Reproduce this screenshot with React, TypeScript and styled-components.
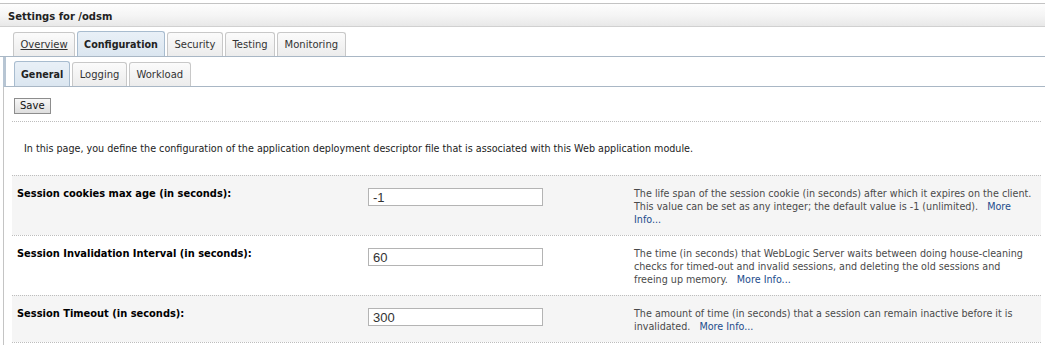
import React from "react";
import styled, { createGlobalStyle } from "styled-components";

const FONT = `"DejaVu Sans", Verdana, sans-serif`;

const GlobalStyle = createGlobalStyle`
  html, body { margin: 0; padding: 0; background: #ffffff; }
  body { font-family: ${FONT}; font-size: 9.6px; color: #333; }
  * { box-sizing: border-box; }
`;

const Page = styled.div`
  width: 1045px;
  height: 345px;
  overflow: hidden;
  padding-top: 3px;
  display: flex;
  flex-direction: column;
`;

const TitleBar = styled.div`
  height: 24px;
  flex: none;
  border-top: 1px solid #c3c3c3;
  border-bottom: 1px solid #d0d0d0;
  background: linear-gradient(to bottom, #fdfdfd 0%, #f4f4f4 55%, #e8e8e8 100%);
  display: flex;
  align-items: center;
  padding: 2px 0 0 8px;
  font-weight: bold;
  font-size: 10px;
  color: #222;
`;

const TabStrip = styled.div<{ $sub?: boolean }>`
  flex: none;
  display: flex;
  align-items: flex-end;
  gap: 2px;
  height: 30px;
  padding-left: ${(p) => (p.$sub ? 8 : 13)}px;
  border-bottom: 1px solid #a9b7c5;
  ${(p) => (p.$sub ? "border-left: 3px solid #b7c5d3; margin-left: -1px;" : "")}
`;

const Tab = styled.div<{ $active?: boolean }>`
  height: ${(p) => (p.$active ? 25 : 24)}px;
  padding: 0 ${(p) => (p.$active ? 6 : 6.5)}px;
  display: flex;
  align-items: center;
  border: 1px solid ${(p) => (p.$active ? "#a8bccf" : "#c8c8c8")};
  border-bottom: none;
  border-radius: 3px 3px 0 0;
  background: ${(p) =>
    p.$active
      ? "linear-gradient(to bottom, #e9f0f7 0%, #dbe6f0 100%)"
      : "linear-gradient(to bottom, #fbfbfb 0%, #ececec 100%)"};
  font-weight: ${(p) => (p.$active ? "bold" : "normal")};
  font-size: ${(p) => (p.$active ? 9.6 : 10)}px;
  color: ${(p) => (p.$active ? "#222" : "#333")};
  white-space: nowrap;
`;

const TabLink = styled.span`
  text-decoration: underline;
`;

const Panel = styled.div`
  flex: 1;
  margin-left: 3px;
  border-left: 1px solid #c4c4c4;
  display: flex;
  flex-direction: column;
`;

const Toolbar = styled.div`
  padding: 11px 0 0 10px;
  height: 34px;
`;

const Button = styled.button`
  height: 16px;
  padding: 0 5px;
  font-family: ${FONT};
  font-size: 10px;
  color: #111;
  border: 1px solid #8d8d8d;
  border-radius: 0;
  background: linear-gradient(to bottom, #f7f7f7 0%, #dedede 100%);
  line-height: 14px;
`;

const Content = styled.div`
  margin: 0 4px 0 8px;
  border-bottom: 1px dotted #bdbdbd;
`;

const Intro = styled.div`
  border-top: 1px dotted #bdbdbd;
  padding: 20px 0 20px 12px;
  line-height: 13px;
  color: #222;
`;

const Row = styled.div<{ $shade?: boolean }>`
  display: grid;
  grid-template-columns: 351px 266px 1fr;
  border-top: 1px dotted #bdbdbd;
  background: ${(p) => (p.$shade ? "#f5f5f5" : "#ffffff")};
  padding: 11px 0 9px 0;
  line-height: 13px;
`;

const Label = styled.div`
  padding-left: 5px;
  font-weight: bold;
  font-size: 9.9px;
  color: #000;
`;

const InputCell = styled.div`
  padding-left: 5px;
  padding-top: 1px;
`;

const TextInput = styled.input`
  width: 175px;
  height: 18px;
  border: 1px solid #b4b4b4;
  background: #fff;
  padding: 0 4px;
  font-family: "Liberation Sans", Arial, sans-serif;
  font-size: 13px;
  color: #333;
  outline: none;
`;

const Help = styled.div`
  padding: 0 6.5px 0 5px;
  color: #4a4a4a;
`;

const More = styled.a`
  color: #1c4c8c;
  text-decoration: none;
  margin-left: 9px;
`;

const fields = [
  {
    label: "Session cookies max age (in seconds):",
    value: "-1",
    help: "The life span of the session cookie (in seconds) after which it expires on the client. This value can be set as any integer; the default value is -1 (unlimited).",
  },
  {
    label: "Session Invalidation Interval (in seconds):",
    value: "60",
    help: "The time (in seconds) that WebLogic Server waits between doing house-cleaning checks for timed-out and invalid sessions, and deleting the old sessions and freeing up memory.",
  },
  {
    label: "Session Timeout (in seconds):",
    value: "300",
    help: "The amount of time (in seconds) that a session can remain inactive before it is invalidated.",
  },
];

export default function App() {
  return (
    <>
      <GlobalStyle />
      <Page>
        <TitleBar>Settings for /odsm</TitleBar>
        <TabStrip>
          <Tab><TabLink>Overview</TabLink></Tab>
          <Tab $active>Configuration</Tab>
          <Tab>Security</Tab>
          <Tab>Testing</Tab>
          <Tab>Monitoring</Tab>
        </TabStrip>
        <Panel>
          <TabStrip $sub>
            <Tab $active>General</Tab>
            <Tab>Logging</Tab>
            <Tab>Workload</Tab>
          </TabStrip>
          <Toolbar>
            <Button>Save</Button>
          </Toolbar>
          <Content>
            <Intro>
              In this page, you define the configuration of the application deployment descriptor file that is associated with this Web application module.
            </Intro>
            {fields.map((f, i) => (
              <Row key={f.label} $shade={i % 2 === 0}>
                <Label>{f.label}</Label>
                <InputCell>
                  <TextInput defaultValue={f.value} />
                </InputCell>
                <Help>
                  {f.help}
                  <More href="#">More Info...</More>
                </Help>
              </Row>
            ))}
          </Content>
        </Panel>
      </Page>
    </>
  );
}
